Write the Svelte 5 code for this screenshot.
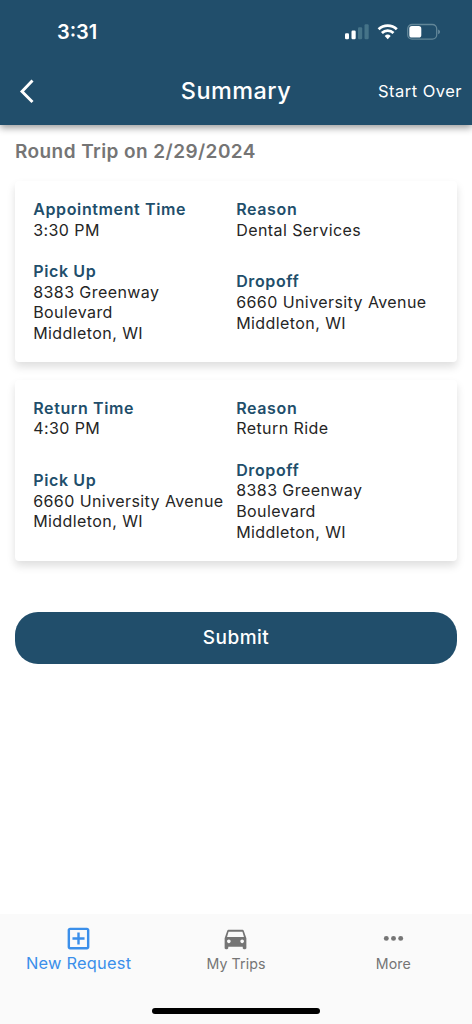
<script>
  const trips = [
    [
      { label: 'Appointment Time', lines: ['3:30 PM'] },
      { label: 'Reason', lines: ['Dental Services'] },
      { label: 'Pick Up', lines: ['8383 Greenway', 'Boulevard', 'Middleton, WI'] },
      { label: 'Dropoff', lines: ['6660 University Avenue', 'Middleton, WI'] }
    ],
    [
      { label: 'Return Time', lines: ['4:30 PM'] },
      { label: 'Reason', lines: ['Return Ride'] },
      { label: 'Pick Up', lines: ['6660 University Avenue', 'Middleton, WI'] },
      { label: 'Dropoff', lines: ['8383 Greenway', 'Boulevard', 'Middleton, WI'] }
    ]
  ];
</script>

<div class="screen">
  <header>
    <div class="status">
      <span class="time">3:31</span>
      <svg class="indicators" width="96" height="20" viewBox="0 0 96 20">
        <g fill="#fff">
          <rect x="0" y="11.3" width="4" height="6" rx="1.2" />
          <rect x="6.5" y="8.5" width="4.2" height="8.8" rx="1.2" />
          <g fill="#457388">
            <rect x="13" y="5.3" width="4.2" height="12" rx="1.2" />
            <rect x="19.5" y="2.2" width="4.2" height="15.1" rx="1.2" />
          </g>
        </g>
        <g fill="none" stroke="#fff" stroke-width="2.8">
          <path d="M33.6 7.3a13.2 13.2 0 0 1 18.2 0" />
          <path d="M36.9 10.9a8.4 8.4 0 0 1 11.6 0" />
        </g>
        <path d="M42.7 17.3l-3-3.3a4.4 4.4 0 0 1 6 0z" fill="#fff" />
        <rect x="62.7" y="2.5" width="29" height="14.6" rx="4.4" fill="none" stroke="#628698" stroke-width="1.3" />
        <rect x="64.3" y="4.1" width="12" height="11.4" rx="2.6" fill="#fff" />
        <path d="M93.3 7.5v4.7c2-.8 2-3.9 0-4.7z" fill="#7898a8" />
      </svg>
    </div>
    <div class="bar">
      <svg class="back" width="16" height="26" viewBox="0 0 16 26"><path d="M13.5 2.6 3 13.4l10.5 10.7" fill="none" stroke="#fff" stroke-width="2.9" /></svg>
      <h1>Summary</h1>
      <span class="over">Start Over</span>
    </div>
  </header>

  <main>
    <h2>Round Trip on 2/29/2024</h2>
    {#each trips as trip}
      <section class="card">
        {#each trip as field}
          <div class="field">
            <strong>{field.label}</strong>
            {#each field.lines as line}<span>{line}</span>{/each}
          </div>
        {/each}
      </section>
    {/each}
    <button>Submit</button>
  </main>

  <nav>
    <div class="tabs">
      <div class="tab active">
        <svg width="29" height="29" viewBox="0 0 24 24" fill="currentColor"><path d="M19 3H5c-1.11 0-2 .9-2 2v14c0 1.1.89 2 2 2h14c1.1 0 2-.9 2-2V5c0-1.1-.9-2-2-2zm0 16H5V5h14v14zm-8-2h2v-4h4v-2h-4V7h-2v4H7v2h4z" /></svg>
        <span>New Request</span>
      </div>
      <div class="tab">
        <svg width="29" height="29" viewBox="0 0 24 24" fill="currentColor"><path d="M18.92 5.01C18.72 4.42 18.16 4 17.5 4h-11c-.66 0-1.21.42-1.42 1.01L3 11v8c0 .55.45 1 1 1h1c.55 0 1-.45 1-1v-1h12v1c0 .55.45 1 1 1h1c.55 0 1-.45 1-1v-8l-2.08-5.99zM6.5 15c-.83 0-1.5-.67-1.5-1.5S5.67 12 6.5 12s1.5.67 1.5 1.5S7.33 15 6.5 15zm11 0c-.83 0-1.5-.67-1.5-1.5s.67-1.5 1.5-1.5 1.5.67 1.5 1.5-.67 1.5-1.5 1.5zM5 10l1.27-4.5h11.46L19 10H5z" /></svg>
        <span>My Trips</span>
      </div>
      <div class="tab">
        <svg width="29" height="29" viewBox="0 0 29 29" fill="currentColor"><circle cx="7.3" cy="13.4" r="2.45" /><circle cx="14.5" cy="13.4" r="2.45" /><circle cx="21.7" cy="13.4" r="2.45" /></svg>
        <span>More</span>
      </div>
    </div>
    <div class="home"></div>
  </nav>
</div>

<style>
  :global(body) { margin: 0; }
  .screen {
    width: 472px;
    height: 1024px;
    display: flex;
    flex-direction: column;
    background: #fff;
    font-family: Inter, "Liberation Sans", sans-serif;
    overflow: hidden;
  }
  header {
    height: 125px;
    flex: none;
    background: #214e6b;
    color: #fff;
    box-shadow: 0 3px 7px rgba(0, 0, 0, .38);
    z-index: 1;
  }
  .status {
    height: 57px;
    display: flex;
    justify-content: space-between;
    padding: 0 31px 0 57px;
  }
  .time { font-size: 20px; font-weight: 600; line-height: 24px; margin-top: 20px; }
  .indicators { margin-top: 22px; }
  .bar {
    height: 68px;
    display: grid;
    grid-template-columns: 1fr auto 1fr;
    align-items: center;
    padding: 0 10px 0 19px;
  }
  .bar h1 { margin: 0 0 0 -9px; font-size: 23.4px; line-height: 28px; font-weight: 450; letter-spacing: .5px; }
  .over { justify-self: end; font-size: 16.5px; letter-spacing: .47px; }
  main {
    flex: 1;
    display: flex;
    flex-direction: column;
    padding: 15px 15px 0;
  }
  h2 { margin: 0 0 16.8px; font-size: 19px; line-height: 24px; font-weight: 600; color: #757575; letter-spacing: .42px; }
  .card {
    display: grid;
    grid-template-columns: 203px 1fr;
    row-gap: 20.6px;
    align-items: center;
    padding: 18.2px;
    margin-bottom: 17.9px;
    border-radius: 4px;
    background: #fff;
    box-shadow: 0 5px 8px rgba(0, 0, 0, .13);
  }
  .field {
    display: flex;
    flex-direction: column;
    font-size: 16px;
    line-height: 20.65px;
    letter-spacing: .42px;
    color: #252525;
    white-space: nowrap;
  }
  .field strong { font-weight: 600; color: #214e6b; letter-spacing: .63px; }
  button {
    height: 52px;
    margin-top: 33.4px;
    padding: 1px 0 0;
    border: 0;
    border-radius: 23px;
    background: #214e6b;
    color: #fff;
    font: 450 19px/24px Inter, "Liberation Sans", sans-serif;
    letter-spacing: .45px;
  }
  nav {
    height: 110px;
    flex: none;
    background: #fafafa;
    display: flex;
    flex-direction: column;
    align-items: center;
  }
  .tabs { display: grid; grid-template-columns: repeat(3, 1fr); width: 100%; height: 94px; }
  .tab {
    display: flex;
    flex-direction: column;
    align-items: center;
    padding-top: 11px;
    color: #757575;
    font-size: 14.2px;
    letter-spacing: .1px;
  }
  .tab span { line-height: 20px; }
  .active { padding-top: 10px; color: #3b8fea; font-size: 16.4px; letter-spacing: .22px; }
  .home { width: 168px; height: 6px; border-radius: 3px; background: #000; }
</style>
